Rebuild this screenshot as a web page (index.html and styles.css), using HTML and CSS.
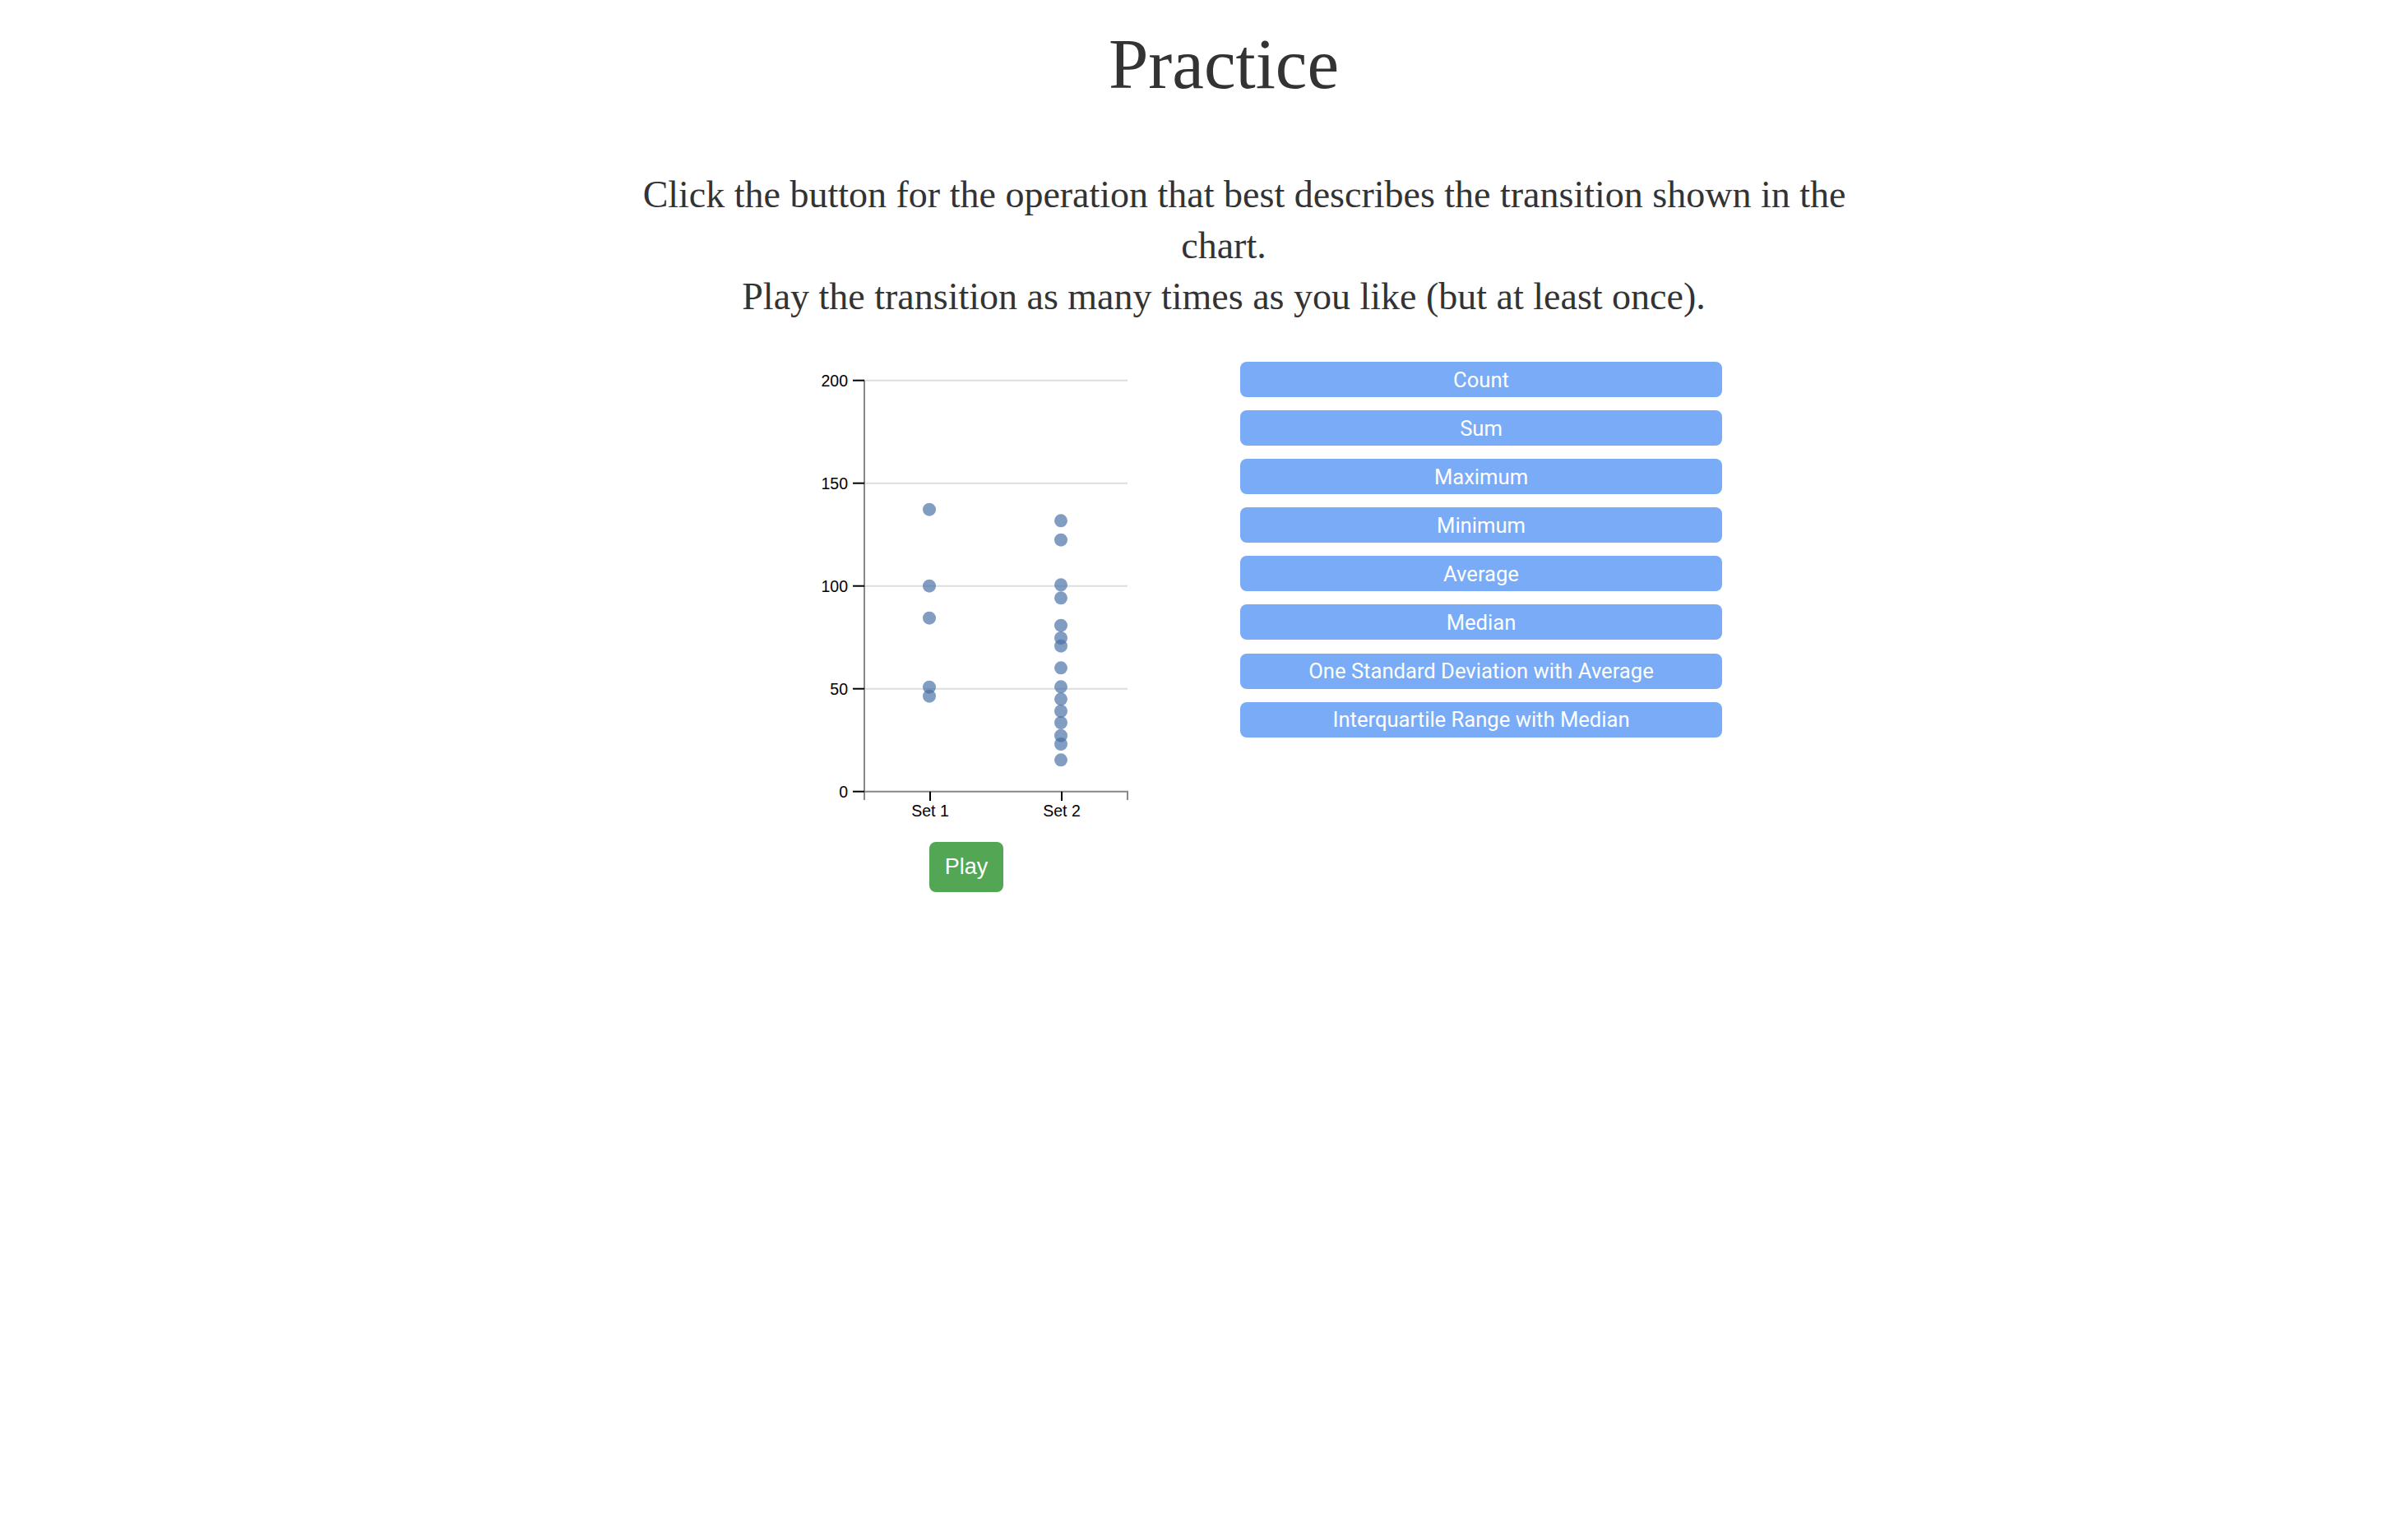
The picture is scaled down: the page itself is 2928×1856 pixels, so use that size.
FILE: index.html
```html
<!DOCTYPE html>
<html lang="en">
<head>
<meta charset="utf-8">
<title>Practice</title>
<link rel="stylesheet" href="styles.css">
</head>
<body>
<div class="page">
  <h1 class="title">Practice</h1>
  <p class="intro"><span class="lead">Click the button for the operation that best describes the transition shown in the</span><br>chart.<br>Play the transition as many times as you like (but at least once).</p>
</div>
<div class="row">
  <div class="chart-col">
    <svg class="chart" width="400" height="565" viewBox="0 0 400 565" xmlns="http://www.w3.org/2000/svg">
      <g class="grid">
        <line x1="76" x2="396" y1="22.7" y2="22.7"/>
        <line x1="76" x2="396" y1="147.7" y2="147.7"/>
        <line x1="76" x2="396" y1="272.7" y2="272.7"/>
        <line x1="76" x2="396" y1="397.7" y2="397.7"/>
      </g>
      <path class="domain" d="M76,22.7V533M76,522.7H396V533"/>
      <g class="ticks">
        <line x1="62" x2="76" y1="22.7" y2="22.7"/>
        <line x1="62" x2="76" y1="147.7" y2="147.7"/>
        <line x1="62" x2="76" y1="272.7" y2="272.7"/>
        <line x1="62" x2="76" y1="397.7" y2="397.7"/>
        <line x1="62" x2="76" y1="522.7" y2="522.7"/>
        <line x1="156" x2="156" y1="522.7" y2="534"/>
        <line x1="316" x2="316" y1="522.7" y2="534"/>
      </g>
      <g class="ylabels">
        <text x="56" y="22.7">200</text>
        <text x="56" y="147.7">150</text>
        <text x="56" y="272.7">100</text>
        <text x="56" y="397.7">50</text>
        <text x="56" y="522.7">0</text>
      </g>
      <g class="xlabels">
        <text x="156" y="553">Set 1</text>
        <text x="316" y="553">Set 2</text>
      </g>
      <g class="dots">
        <circle cx="155" cy="179.7" r="8"/>
        <circle cx="155" cy="272.7" r="8"/>
        <circle cx="155" cy="311.7" r="8"/>
        <circle cx="155" cy="395.7" r="8"/>
        <circle cx="155" cy="406.7" r="8"/>
        <circle cx="315" cy="193.3" r="8"/>
        <circle cx="315" cy="216.7" r="8"/>
        <circle cx="315" cy="271.3" r="8"/>
        <circle cx="315" cy="287.3" r="8"/>
        <circle cx="315" cy="320.7" r="8"/>
        <circle cx="315" cy="336" r="8"/>
        <circle cx="315" cy="345.7" r="8"/>
        <circle cx="315" cy="372.3" r="8"/>
        <circle cx="315" cy="395.3" r="8"/>
        <circle cx="315" cy="410.3" r="8"/>
        <circle cx="315" cy="425" r="8"/>
        <circle cx="315" cy="439" r="8"/>
        <circle cx="315" cy="454.7" r="8"/>
        <circle cx="315" cy="465" r="8"/>
        <circle cx="315" cy="484.3" r="8"/>
      </g>
    </svg>
    <button class="play">Play</button>
  </div>
  <div class="ops">
    <button class="op">Count</button>
    <button class="op">Sum</button>
    <button class="op">Maximum</button>
    <button class="op">Minimum</button>
    <button class="op">Average</button>
    <button class="op">Median</button>
    <button class="op">One Standard Deviation with Average</button>
    <button class="op">Interquartile Range with Median</button>
  </div>
</div>
</body>
</html>
```
FILE: styles.css
```css
html, body {
  margin: 0;
  padding: 0;
  background: #ffffff;
}

body {
  color: #333333;
  font-family: "Liberation Serif", "DejaVu Serif", serif;
}

.page {
  padding-left: 48px;
  text-align: center;
}

.title {
  margin: 36px 0 0 0;
  font-size: 87px;
  line-height: 84px;
  font-weight: normal;
}

.intro {
  margin: 86px 0 0 0;
  font-size: 46px;
  line-height: 62px;
}

.lead {
  padding-left: 50px;
}

.row {
  display: flex;
  justify-content: center;
  align-items: flex-start;
  gap: 133px;
  padding-left: 141px;
  margin-top: 48px;
}

.chart-col {
  width: 400px;
  display: flex;
  flex-direction: column;
  align-items: center;
}

.chart {
  display: block;
  overflow: visible;
}

.grid line {
  stroke: #dddddd;
  stroke-width: 2;
}

.domain {
  fill: none;
  stroke: #888888;
  stroke-width: 2;
}

.ticks line {
  stroke: #000000;
  stroke-width: 2;
}

.ylabels text,
.xlabels text {
  font-family: "Liberation Sans", Arial, sans-serif;
  font-size: 19.5px;
  fill: #000000;
}

.ylabels text {
  text-anchor: end;
  dominant-baseline: central;
}

.xlabels text {
  text-anchor: middle;
}

.dots circle {
  fill: rgb(70, 110, 165);
  fill-opacity: 0.68;
}

.play {
  margin-top: 19px;
  width: 90px;
  height: 61px;
  padding: 0;
  border: none;
  border-radius: 8px;
  background: #53a653;
  color: #ffffff;
  font-family: "Liberation Sans", Arial, sans-serif;
  font-size: 27px;
}

.ops {
  width: 586px;
  display: flex;
  flex-direction: column;
  gap: 16.1px;
}

.op {
  height: 43px;
  padding: 0;
  border: none;
  border-radius: 8px;
  background: #79abf7;
  color: #ffffff;
  font-family: Roboto, "Noto Sans", sans-serif;
  font-size: 25.6px;
  display: flex;
  align-items: center;
  justify-content: center;
}
```
